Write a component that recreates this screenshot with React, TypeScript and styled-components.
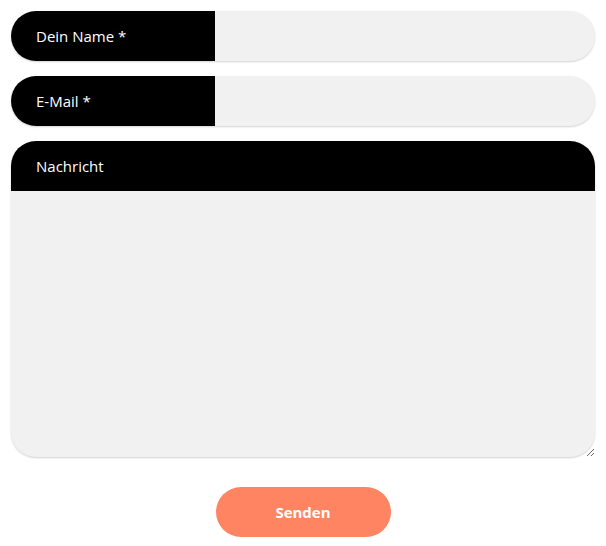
import styled, { createGlobalStyle } from "styled-components";

const Global = createGlobalStyle`
    body {
        margin: 0;
        background: #fff;
        font-family: "Open Sans", "Noto Sans", sans-serif;
    }
`;

const Form = styled.form`
    display: flex;
    flex-direction: column;
    gap: 15px;
    padding: 11px 11px 0;
    width: 606px;
    box-sizing: border-box;
`;

const Row = styled.div`
    display: flex;
    height: 50px;
    border-radius: 25px;
    overflow: hidden;
    background: #f1f1f1;
    box-shadow: 0 1px 2px rgba(0, 0, 0, 0.18);
`;

const Label = styled.label<{ block?: boolean }>`
    display: flex;
    align-items: center;
    box-sizing: border-box;
    height: 50px;
    padding-left: 25px;
    background: #000;
    color: #fff;
    font-size: 15px;
    flex: ${p => (p.block ? "none" : "0 0 204px")};
    border-radius: ${p => (p.block ? "25px 25px 0 0" : "0")};
`;

const Input = styled.input`
    flex: 1 1;
    border: none;
    outline: none;
    background: transparent;
    padding: 0 20px;
    font: inherit;
`;

const MessageBox = styled.div`
    display: flex;
    flex-direction: column;
    border-radius: 25px;
    background: #f1f1f1;
    box-shadow: 0 1px 2px rgba(0, 0, 0, 0.18);
`;

const TextArea = styled.textarea`
    display: block;
    box-sizing: border-box;
    height: 266px;
    border: none;
    border-radius: 0 0 25px 25px;
    outline: none;
    background: transparent;
    padding: 12px 25px;
    font: inherit;
    resize: vertical;
`;

const Actions = styled.div`
    display: flex;
    justify-content: center;
    margin-top: 15px;
`;

const Submit = styled.button`
    width: 175px;
    height: 50px;
    border: none;
    border-radius: 25px;
    background: #ff8562;
    color: #fff;
    font-family: "Open Sans", "Noto Sans", sans-serif;
    font-weight: 700;
    font-size: 15px;
    cursor: pointer;
`;

export default function App() {
    return <>
        <Global />
        <Form onSubmit={e => e.preventDefault()}>
            <Row>
                <Label htmlFor="name">Dein Name *</Label>
                <Input id="name" type="text" />
            </Row>
            <Row>
                <Label htmlFor="mail">E-Mail *</Label>
                <Input id="mail" type="email" />
            </Row>
            <MessageBox>
                <Label block htmlFor="msg">Nachricht</Label>
                <TextArea id="msg" />
            </MessageBox>
            <Actions>
                <Submit type="submit">Senden</Submit>
            </Actions>
        </Form>
    </>;
}
